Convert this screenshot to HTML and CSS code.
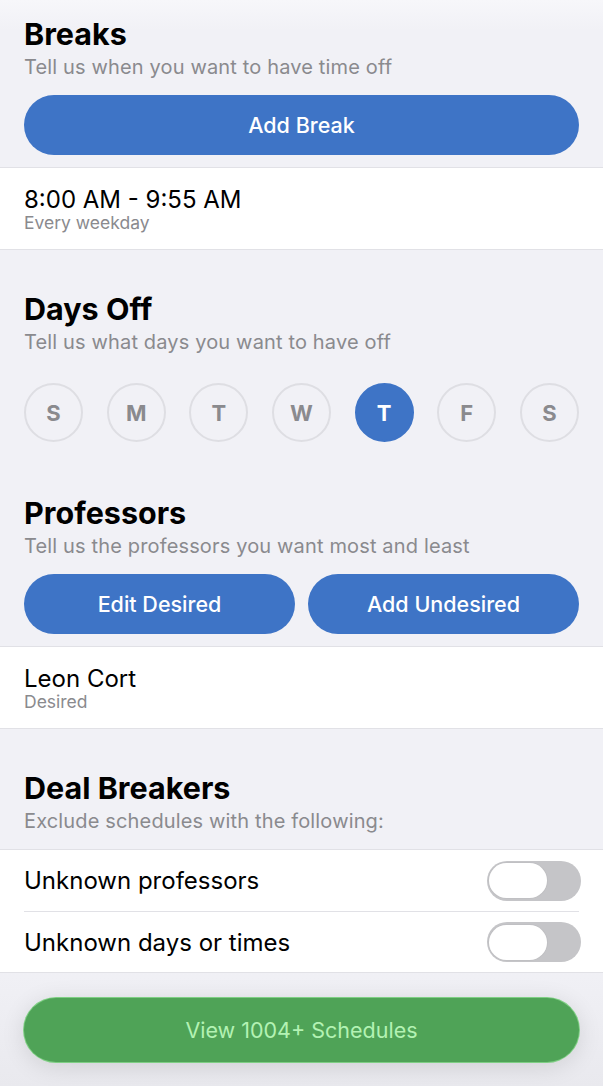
FILE: index.html
```html
<!DOCTYPE html>
<html>
    <head>
        <title>Schedule Preferences</title>
        <link rel="stylesheet" href="styles.css">
    </head>
    <body>
        <main class="screen">
            <section class="group">
                <div class="group-head">
                    <h2>Breaks</h2>
                    <p>Tell us when you want to have time off</p>
                </div>
                <div class="actions">
                    <button class="pill blue">Add Break</button>
                </div>
                <ul class="list">
                    <li class="item">
                        <span class="item-title">8:00 AM - 9:55 AM</span>
                        <span class="item-sub">Every weekday</span>
                    </li>
                </ul>
            </section>

            <section class="group">
                <div class="group-head">
                    <h2>Days Off</h2>
                    <p>Tell us what days you want to have off</p>
                </div>
                <div class="days">
                    <span class="day">S</span>
                    <span class="day">M</span>
                    <span class="day">T</span>
                    <span class="day">W</span>
                    <span class="day selected">T</span>
                    <span class="day">F</span>
                    <span class="day">S</span>
                </div>
            </section>

            <section class="group professors">
                <div class="group-head">
                    <h2>Professors</h2>
                    <p>Tell us the professors you want most and least</p>
                </div>
                <div class="actions">
                    <button class="pill blue">Edit Desired</button>
                    <button class="pill blue">Add Undesired</button>
                </div>
                <ul class="list">
                    <li class="item">
                        <span class="item-title">Leon Cort</span>
                        <span class="item-sub">Desired</span>
                    </li>
                </ul>
            </section>

            <section class="group">
                <div class="group-head">
                    <h2>Deal Breakers</h2>
                    <p>Exclude schedules with the following:</p>
                </div>
                <ul class="list toggles">
                    <li class="toggle-row">
                        <span>Unknown professors</span>
                        <span class="switch"><span class="knob"></span></span>
                    </li>
                    <li class="toggle-row">
                        <span>Unknown days or times</span>
                        <span class="switch"><span class="knob"></span></span>
                    </li>
                </ul>
            </section>

            <div class="footer">
                <button class="pill green">View 1004+ Schedules</button>
            </div>
        </main>
    </body>
</html>
```

FILE: styles.css
```css
body {
    margin: 0;
    background: linear-gradient(#f7f7fa, #f1f1f6 30px, #f1f1f6 960px, #e9e9ee);
    color: black;
    font-family: Inter, 'Noto Sans', sans-serif;
    min-height: 1086px;
}

.screen {
    padding-top: 16px;
}

.group {
    margin-top: 41px;
}

.group:first-child {
    margin-top: 0;
}

.professors {
    margin-top: 53px;
}

.group-head {
    padding: 0 24px;
}

.group-head h2 {
    margin: 0;
    font-size: 30.5px;
    line-height: 36px;
    font-weight: 700;
}

.group-head p {
    margin: 3px 0 0;
    font-size: 20px;
    line-height: 24px;
    letter-spacing: 0.15px;
    color: #8a8a8e;
}

.actions {
    display: flex;
    gap: 13px;
    margin-top: 16px;
    padding: 0 24px;
}

.pill {
    flex: 1;
    height: 60px;
    border: none;
    border-radius: 30px;
    font-family: inherit;
    font-size: 21.5px;
    font-weight: 500;
}

.blue {
    background: #3e74c6;
    color: white;
}

.list {
    list-style: none;
    margin: 12px 0 0;
    padding: 0;
    background: white;
    border-top: 1px solid #e1e1e6;
    border-bottom: 1px solid #e1e1e6;
}

.item {
    display: flex;
    flex-direction: column;
    padding: 18px 24px 16px;
}

.item-title {
    font-size: 24px;
    line-height: 27px;
}

.item-sub {
    font-size: 17.5px;
    line-height: 20px;
    color: #8a8a8e;
}

.days {
    display: flex;
    justify-content: space-between;
    margin-top: 29px;
    padding: 0 24px;
}

.day {
    display: flex;
    align-items: center;
    justify-content: center;
    width: 55px;
    height: 55px;
    border: 2px solid #dedee3;
    border-radius: 50%;
    font-size: 22px;
    font-weight: 700;
    color: #8a8a8e;
}

.day.selected {
    background: #3e74c6;
    border-color: #3e74c6;
    color: white;
}

.toggles {
    margin-top: 16px;
}

.toggle-row {
    display: flex;
    align-items: center;
    justify-content: space-between;
    height: 61px;
    margin: 0 22px 0 24px;
    font-size: 24px;
}

.toggle-row + .toggle-row {
    height: 60px;
    border-top: 1px solid #e1e1e6;
    margin-right: 24px;
}

.toggle-row + .toggle-row .switch {
    margin-right: -2px;
}

.switch {
    display: flex;
    align-items: center;
    width: 94px;
    height: 40px;
    padding: 0 2px;
    box-sizing: border-box;
    border-radius: 20px;
    background: #c5c5c8;
}

.knob {
    width: 58px;
    height: 35px;
    border-radius: 18px;
    background: white;
    box-shadow: 0 0 0 1px #c0c0c3;
}

.footer {
    margin-top: 25px;
    padding: 0 24px;
    display: flex;
}

.green {
    height: 64px;
    border-radius: 32px;
    background: #4fa357;
    color: #b3f2b3;
    font-size: 21.5px;
    font-weight: 400;
    box-shadow: 0 0 0 1px #7fcf84, 0 4px 24px rgba(0, 0, 0, 0.12);
}
```
